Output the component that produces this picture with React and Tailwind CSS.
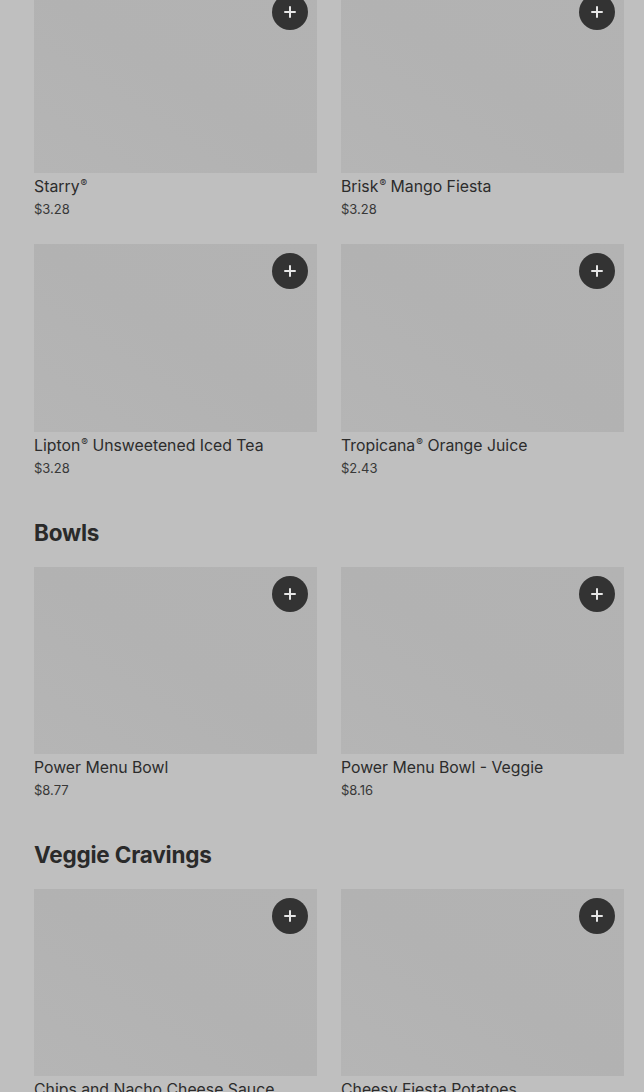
const sections = [
  {
    title: null,
    items: [
      { name: 'Starry', reg: true, price: '$3.28' },
      { name: 'Brisk', reg: true, rest: ' Mango Fiesta', price: '$3.28' },
      { name: 'Lipton', reg: true, rest: ' Unsweetened Iced Tea', price: '$3.28' },
      { name: 'Tropicana', reg: true, rest: ' Orange Juice', price: '$2.43' },
    ],
  },
  {
    title: 'Bowls',
    items: [
      { name: 'Power Menu Bowl', price: '$8.77' },
      { name: 'Power Menu Bowl - Veggie', price: '$8.16' },
    ],
  },
  {
    title: 'Veggie Cravings',
    items: [
      { name: 'Chips and Nacho Cheese Sauce', price: '$1.99' },
      { name: 'Cheesy Fiesta Potatoes', price: '$2.49' },
    ],
  },
];

function PlusIcon() {
  return (
    <svg width="14" height="14" viewBox="0 0 14 14" fill="none">
      <path d="M7 2v10M2 7h10" stroke="#e6e6e6" strokeWidth="2" strokeLinecap="round" />
    </svg>
  );
}

function ItemCard({ item, first }) {
  return (
    <div className="flex flex-col">
      <div
        className={
          (first ? 'h-[188px] ' : 'h-[187px] ') +
          'relative bg-gradient-to-tr from-[#b5b5b5] via-[#b2b2b2] to-[#b3b3b3]'
        }
      >
        <button className="absolute top-[9px] right-[9px] flex h-9 w-9 items-center justify-center rounded-full bg-[#333333]">
          <PlusIcon />
        </button>
      </div>
      <div className="mt-[4px] text-[15.8px] leading-[20px] text-[#2c2c2c]">
        {item.name}
        {item.reg && <sup className="relative -top-[5px] ml-[1px] text-[10px]">®</sup>}
        {item.rest}
      </div>
      <div className="mt-[4px] text-[13px] leading-[16px] text-[#383838]">{item.price}</div>
    </div>
  );
}

export default function App() {
  return (
    <div
      className="min-h-[1092px] overflow-hidden bg-[#bfbfbf] pl-[34px] pr-[20px]"
      style={{ fontFamily: 'Inter, "Noto Sans", sans-serif' }}
    >
      <div className="-mt-[15px] flex flex-col gap-[43px]">
        {sections.map((s, i) => (
          <div key={i} className="flex flex-col">
            {s.title && (
              <h2 className="mb-[20px] text-[22.5px] font-[750] leading-[28px] tracking-[-0.2px] text-[#2a2a2a]">
                {s.title}
              </h2>
            )}
            <div className="grid grid-cols-2 gap-x-[24px] gap-y-[27px]">
              {s.items.map((item) => (
                <ItemCard key={item.name} item={item} first={i === 0} />
              ))}
            </div>
          </div>
        ))}
      </div>
    </div>
  );
}
